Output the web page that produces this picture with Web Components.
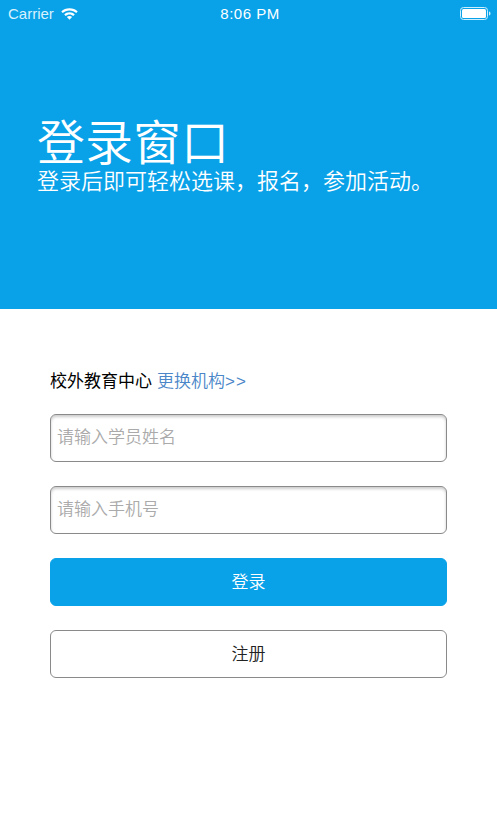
<!DOCTYPE html>
<html lang="zh">
<head>
<meta charset="utf-8">
<title>登录窗口</title>
<style>
  html, body { margin: 0; height: 100%; background: #fff; }
  body { font-family: "Liberation Sans", "Noto Sans CJK SC", sans-serif; }
  login-page { height: 833px; }
</style>
</head>
<body>
<login-page></login-page>

<script>
const CJK = `"Liberation Sans", "Noto Sans CJK SC", sans-serif`;

class StatusBar extends HTMLElement {
  constructor(){
    super();
    this.attachShadow({mode: 'open'});
  }
  connectedCallback(){
    this.shadowRoot.innerHTML = `
    <style>
      :host{
        display: grid;
        grid-template-columns: 1fr auto 1fr;
        align-items: center;
        height: 27px;
        padding: 0 6px 0 8px;
        color: #fff;
        font-size: 15px;
      }
      .left{ display: flex; align-items: center; gap: 7px; color: #d8f1fd; }
      .time{ font-weight: 500; letter-spacing: .5px; margin-left: 1px; }
      .right{ display: flex; justify-content: flex-end; }
      svg{ display: block; }
    </style>
    <div class="left">
      <span>Carrier</span>
      <svg width="17" height="12" viewBox="0 0 17 12" fill="#fff">
        <path d="M8.5 0.2C5.2 0.2 2.4 1.4 0.3 3.4L1.8 5C3.5 3.4 5.9 2.4 8.5 2.4S13.5 3.4 15.2 5L16.7 3.4C14.6 1.4 11.8 0.2 8.5 0.2Z"/>
        <path d="M8.5 4.2C6.4 4.2 4.6 5 3.2 6.3L4.7 7.9C5.7 7 7 6.4 8.5 6.4S11.3 7 12.3 7.9L13.8 6.3C12.4 5 10.6 4.2 8.5 4.2Z"/>
        <path d="M8.5 8C7.5 8 6.6 8.4 5.9 9L8.5 11.8L11.1 9C10.4 8.4 9.5 8 8.5 8Z"/>
      </svg>
    </div>
    <div class="time">8:06 PM</div>
    <div class="right">
      <svg width="31" height="13" viewBox="0 0 31 13">
        <rect x="0.5" y="0.5" width="27" height="12" rx="3" fill="none" stroke="#cdeefc"/>
        <rect x="2" y="2" width="24" height="9" rx="1.5" fill="#fff"/>
        <path d="M29 4.5c1 .2 1.5 1 1.5 2s-.5 1.8-1.5 2z" fill="#cdeefc"/>
      </svg>
    </div>
    `;
  }
}

class LoginBanner extends HTMLElement {
  constructor(){
    super();
    this.attachShadow({mode: 'open'});
  }
  connectedCallback(){
    this.shadowRoot.innerHTML = `
    <style>
      :host{
        display: flex;
        flex-direction: column;
        height: 309px;
        box-sizing: border-box;
        background: #09a2e9;
        color: #fff;
      }
      .copy{ padding: 89px 0 0 37px; }
      h1{
        margin: 0;
        font-size: 48px;
        font-weight: 350;
        line-height: 56px;
      }
      p{
        margin: -5px 0 0;
        font-size: 22px;
        font-weight: 350;
        line-height: 30px;
      }
    </style>
    <slot name="status"></slot>
    <div class="copy">
      <h1>${this.getAttribute('heading')}</h1>
      <p>${this.getAttribute('sub')}</p>
    </div>
    `;
  }
}

class TextField extends HTMLElement {
  constructor(){
    super();
    this.attachShadow({mode: 'open'});
  }
  connectedCallback(){
    this.shadowRoot.innerHTML = `
    <style>
      :host{ display: block; height: 48px; }
      input{
        display: block;
        width: 100%;
        height: 100%;
        box-sizing: border-box;
        margin: 0;
        padding: 0 6px 1px;
        border: 1px solid #8a8a8a;
        border-radius: 6px;
        background: #fff;
        box-shadow: inset 0 2px 3px rgba(0,0,0,.2);
        font: 350 17px ${CJK};
        outline: none;
      }
      input::placeholder{ color: #aaa; opacity: 1; }
    </style>
    <input type="text" placeholder="${this.getAttribute('placeholder')}">
    `;
  }
}

class ActionButton extends HTMLElement {
  constructor(){
    super();
    this.attachShadow({mode: 'open'});
  }
  connectedCallback(){
    this.shadowRoot.innerHTML = `
    <style>
      :host{ display: block; height: 48px; }
      button{
        display: block;
        width: 100%;
        height: 100%;
        box-sizing: border-box;
        margin: 0;
        padding: 0 0 4px;
        border: 1px solid #8a8a8a;
        border-radius: 6px;
        background: #fff;
        color: #222;
        font: 350 17px ${CJK};
      }
      :host([primary]) button{
        border-color: #09a2e9;
        background: #09a2e9;
        color: #fff;
      }
    </style>
    <button><slot></slot></button>
    `;
  }
}

class LoginForm extends HTMLElement {
  constructor(){
    super();
    this.attachShadow({mode: 'open'});
  }
  connectedCallback(){
    this.shadowRoot.innerHTML = `
    <style>
      :host{
        display: flex;
        flex-direction: column;
        gap: 24px;
        padding: 58px 50px 0;
      }
      .org{
        display: flex;
        gap: 5px;
        height: 24px;
        margin-bottom: -1px;
        align-items: center;
        font-size: 17px;
        color: #000;
      }
      a{ color: #4a86c8; text-decoration: none; font-weight: 350; }
      i{ font-style: normal; letter-spacing: 1px; }
    </style>
    <div class="org"><span>校外教育中心</span><a href="#">更换机构<i>&gt;&gt;</i></a></div>
    <text-field placeholder="请输入学员姓名"></text-field>
    <text-field placeholder="请输入手机号"></text-field>
    <action-button primary>登录</action-button>
    <action-button>注册</action-button>
    `;
  }
}

class LoginPage extends HTMLElement {
  constructor(){
    super();
    this.attachShadow({mode: 'open'});
  }
  connectedCallback(){
    this.shadowRoot.innerHTML = `
    <style>
      :host{ display: block; }
    </style>
    <login-banner heading="登录窗口" sub="登录后即可轻松选课，报名，参加活动。">
      <status-bar slot="status"></status-bar>
    </login-banner>
    <login-form></login-form>
    `;
  }
}

customElements.define('status-bar', StatusBar);
customElements.define('login-banner', LoginBanner);
customElements.define('text-field', TextField);
customElements.define('action-button', ActionButton);
customElements.define('login-form', LoginForm);
customElements.define('login-page', LoginPage);
</script>
</body>
</html>
